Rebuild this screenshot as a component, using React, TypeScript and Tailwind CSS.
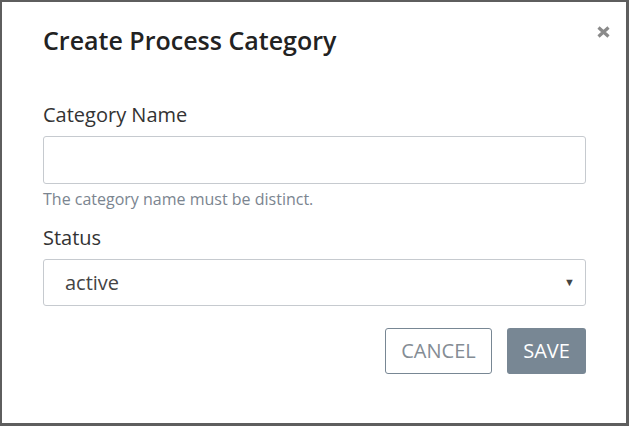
export default function App() {
  return (
    <div className="w-[629px] h-[426px] bg-white" style={{ fontFamily: '"Open Sans", "Liberation Sans", sans-serif' }}>
      <div className="relative h-full border-l-2 border-t-2 border-r-[3px] border-b-[3px] border-[#5e5e5e] pl-[41px] pr-[40px] pt-[23px]">
        <button className="absolute right-[16px] top-[24px] text-[#8a8a8a]" aria-label="Close">
          <svg width="13" height="12" viewBox="0 0 13 12">
            <path d="M1.5 1.5 L11.5 10.5 M11.5 1.5 L1.5 10.5" stroke="currentColor" strokeWidth="3.2" strokeLinecap="butt" />
          </svg>
        </button>

        <h2 className="text-[25px] leading-[31px] font-semibold text-[#222]">
          Create Process Category
        </h2>

        <label className="block mt-[45px] text-[20px] leading-[28px] text-[#333]">
          Category Name
        </label>
        <input
          type="text"
          className="mt-[7px] block w-full h-[48px] rounded-[3px] border border-[#c6cacf] px-[21px] text-[20px] outline-none"
        />
        <p className="mt-[5px] text-[16px] leading-[20px] text-[#7b8590]">
          The category name must be distinct.
        </p>

        <label className="block mt-[15px] text-[20px] leading-[28px] text-[#333]">
          Status
        </label>
        <div className="mt-[7px] h-[47px] rounded-[3px] border border-[#c6cacf] flex items-center justify-between pl-[21px] pr-[10px]">
          <span className="text-[20px] text-[#444]">active</span>
          <span className="text-[11px] text-[#444]">▼</span>
        </div>

        <div className="mt-[22px] flex justify-end gap-[15px]">
          <button className="h-[46px] w-[107px] rounded-[3px] border border-[#788794] text-[20px] text-[#848c94] bg-white">
            CANCEL
          </button>
          <button className="h-[46px] w-[79px] rounded-[3px] bg-[#788794] text-[20px] text-white">
            SAVE
          </button>
        </div>
      </div>
    </div>
  )
}
